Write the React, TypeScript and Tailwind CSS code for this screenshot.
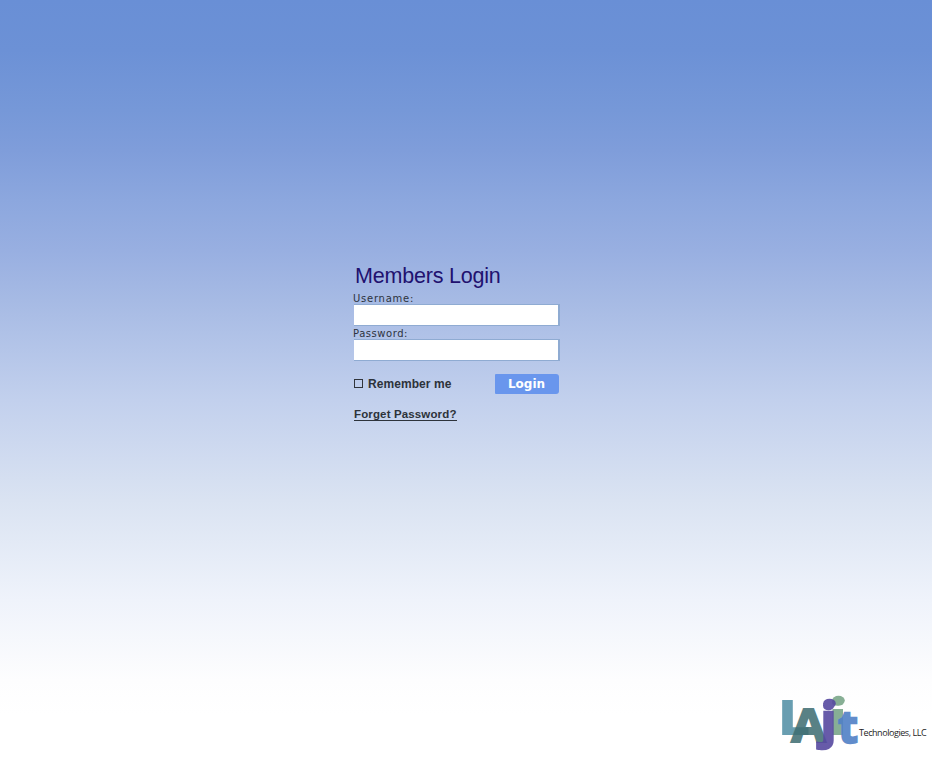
import React from "react";

function Field({ label, type, id }: { label: string; type: string; id: string }) {
  return (
    <div className="h-[35px]">
      <label htmlFor={id} className={`block h-[11px] -ml-px whitespace-nowrap font-['DejaVu_Sans',sans-serif] text-[10px] leading-[11px] text-[#2d333d] ${id === "username" ? "tracking-[0.75px]" : "tracking-[0.55px]"}`}>
        {label}
      </label>
      <input id={id} type={type} className="block h-[22px] w-[206px] rounded-none border-0 border-t border-r-2 border-b border-[#8fabd2] bg-white px-1 text-xs outline-none" />
    </div>
  );
}

function Logo() {
  return (
    <svg width="80" height="60" viewBox="780 694 80 60" overflow="visible" className="shrink-0 font-['Open_Sans',sans-serif] font-bold">
      <g opacity="0.95"><text transform="translate(778.5 734) scale(1.18 1)" fontSize="46" fill="#6199ad" stroke="#6199ad" strokeWidth="2">L</text></g>
      <g opacity="0.85"><text transform="translate(791.5 742) scale(1.07 1)" fontSize="46" fill="#3d6c70" stroke="#3d6c70" strokeWidth="2.2">A</text></g>
      <g opacity="0.9" fill="#7ba78a">
        <text transform="translate(827 735) scale(1.5 1)" fontSize="47">i</text>
        <ellipse cx="838.5" cy="700.5" rx="6.3" ry="4.7" />
      </g>
      <g opacity="0.9" fill="#574aa0">
        <text transform="translate(820.7 737.5) scale(1.08 1)" fontSize="47" stroke="#574aa0" strokeWidth="2.6">j</text>
        <ellipse cx="829.5" cy="703.5" rx="6.3" ry="4.8" />
      </g>
      <g opacity="0.9"><text transform="translate(838.3 743) scale(1 1)" fontSize="45" fill="#5080c6" stroke="#5080c6" strokeWidth="2.4">t</text></g>
    </svg>
  );
}

export default function App() {
  return (
    <main className="flex h-[776px] w-[932px] flex-col justify-between bg-[linear-gradient(to_bottom,#698fd6_0px,#6c91d6_50px,#7698d8_110px,#7f9dda_150px,#8ca7de_200px,#98afe1_250px,#a6bae4_300px,#c2d0ed_400px,#dae3f2_500px,#eff3fb_600px,#fdfdfe_680px,#ffffff_715px)]">
      <form className="ml-[354px] w-[210px] pt-[263px]" onSubmit={(e) => e.preventDefault()}>
        <h1 className="h-[30px] whitespace-nowrap pl-px font-['Liberation_Sans',Arial,sans-serif] text-[21.5px] leading-[26px] tracking-[-0.2px] text-[#21116f]">Members Login</h1>
        <Field id="username" label="Username:" type="text" />
        <Field id="password" label="Password:" type="password" />
        <div className="mt-[11px] flex h-5 items-center">
          <input id="remember" type="checkbox" className="mb-px size-[9px] appearance-none border border-[#30343b]" />
          <label htmlFor="remember" className="ml-[5px] mb-px w-[127px] whitespace-nowrap font-['Liberation_Sans',Arial,sans-serif] text-[12px] font-bold tracking-[0.07px] text-[#2d333b]">Remember me</label>
          <button className="h-5 w-16 rounded-r-[3px] rounded-l-[1px] bg-[#6996ed] pr-px font-['DejaVu_Sans',sans-serif] text-[12px] leading-5 font-bold text-white">Login</button>
        </div>
        <a className="mt-[14px] inline-block h-[13px] whitespace-nowrap border-b border-[#2d333b] font-['Liberation_Sans',Arial,sans-serif] text-[11.5px] leading-[13px] font-bold tracking-[0.14px] text-[#2d333b]">Forget Password?</a>
      </form>
      <footer className="mb-[22px] flex items-center justify-end pr-[5px]">
        <Logo />
        <span className="-ml-px mt-[17px] w-[68px] whitespace-nowrap font-['Open_Sans',sans-serif] text-[9px] leading-3 tracking-[-0.44px] text-[#242424]">Technologies, LLC</span>
      </footer>
    </main>
  );
}
